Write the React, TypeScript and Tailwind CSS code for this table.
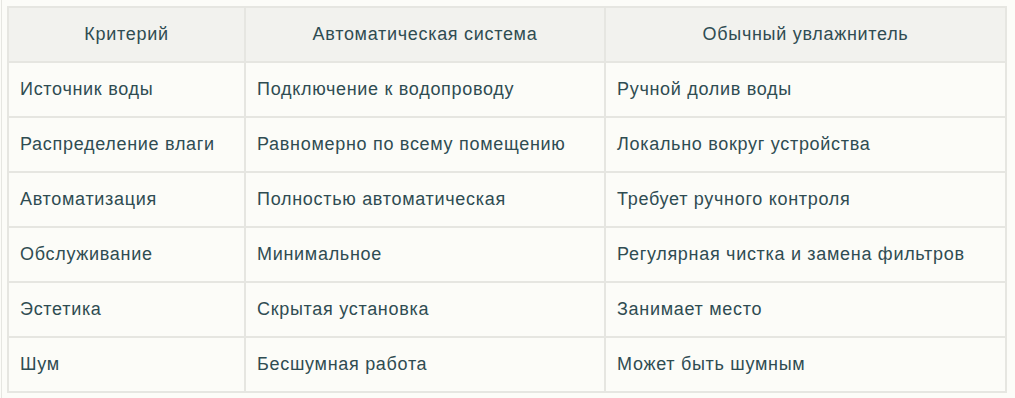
import React from "react";

const rows: [string, string, string][] = [
  ["Источник воды", "Подключение к водопроводу", "Ручной долив воды"],
  ["Распределение влаги", "Равномерно по всему помещению", "Локально вокруг устройства"],
  ["Автоматизация", "Полностью автоматическая", "Требует ручного контроля"],
  ["Обслуживание", "Минимальное", "Регулярная чистка и замена фильтров"],
  ["Эстетика", "Скрытая установка", "Занимает место"],
  ["Шум", "Бесшумная работа", "Может быть шумным"],
];

export default function App() {
  return (
    <div
      className="w-[1015px] h-[398px] bg-[#fcfcf8] text-[#2f4c52] overflow-hidden"
      style={{ fontFamily: '"Liberation Sans", Arial, sans-serif' }}
    >
      <div className="ml-[1px] h-full border-l border-[#e6e6e1] pl-[5px] pt-[6px]">
        <table className="border-separate border-spacing-0 border border-[#e6e6e1] w-[1000px] text-[18px] tracking-[0.7px]">
          <thead>
            <tr className="bg-[#f2f2ee]">
              <th className="w-[237px] border border-[#e6e6e1] py-[16px] leading-[21px] font-normal text-center">Критерий</th>
              <th className="w-[360px] border border-[#e6e6e1] py-[16px] leading-[21px] font-normal text-center">Автоматическая система</th>
              <th className="border border-[#e6e6e1] py-[16px] leading-[21px] font-normal text-center">Обычный увлажнитель</th>
            </tr>
          </thead>
          <tbody>
            {rows.map((r, i) => (
              <tr key={i}>
                {r.map((c, j) => (
                  <td key={j} className="border border-[#e6e6e1] py-[16px] px-[11px] leading-[21px] text-left">
                    {c}
                  </td>
                ))}
              </tr>
            ))}
          </tbody>
        </table>
      </div>
    </div>
  );
}
